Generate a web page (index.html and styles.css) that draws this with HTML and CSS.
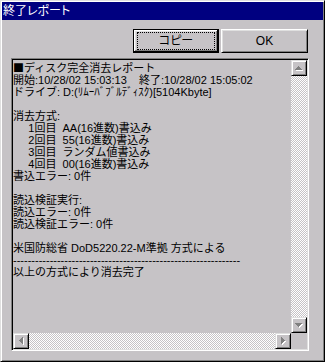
FILE: index.html
```html
<!DOCTYPE html>
<html lang="ja">
<head>
<meta charset="utf-8">
<title>終了レポート</title>
<link rel="stylesheet" href="styles.css">
</head>
<body>
<div class="window">
  <div class="titlebar"><span class="title">終了レポート</span></div>
  <div class="body">
    <div class="buttons">
      <button class="btn btn-default"><span class="focus">コピー</span></button>
      <button class="btn btn-ok"><span class="label">OK</span></button>
    </div>
    <div class="edit">
<pre class="text"><span class="heading">■ディスク完全消去レポート</span>
開始:10/28/02 15:03:13    終了:10/28/02 15:05:02
ドライブ: D:(ﾘﾑｰﾊﾞﾌﾞﾙﾃﾞｨｽｸ)[5104Kbyte]

消去方式:
     1回目  AA(16進数)書込み
     2回目  55(16進数)書込み
     3回目  ランダム値書込み
     4回目  00(16進数)書込み
書込エラー: 0件

読込検証実行:
読込エラー: 0件
読込検証エラー: 0件

米国防総省 DoD5220.22-M準拠 方式による
--------------------------------------------------------------
以上の方式により消去完了</pre>
      <div class="vscroll">
        <div class="sbtn">
          <svg width="8" height="5" viewBox="0 0 8 5" shape-rendering="crispEdges">
            <g fill="#fff"><rect x="4" y="1" width="1" height="1"/><rect x="3" y="2" width="3" height="1"/><rect x="2" y="3" width="5" height="1"/><rect x="1" y="4" width="7" height="1"/></g>
            <g fill="#808080"><rect x="3" y="0" width="1" height="1"/><rect x="2" y="1" width="3" height="1"/><rect x="1" y="2" width="5" height="1"/><rect x="0" y="3" width="7" height="1"/></g>
          </svg>
        </div>
        <div class="track"></div>
        <div class="sbtn">
          <svg width="8" height="5" viewBox="0 0 8 5" shape-rendering="crispEdges">
            <g fill="#fff"><rect x="1" y="1" width="7" height="1"/><rect x="2" y="2" width="5" height="1"/><rect x="3" y="3" width="3" height="1"/><rect x="4" y="4" width="1" height="1"/></g>
            <g fill="#808080"><rect x="0" y="0" width="7" height="1"/><rect x="1" y="1" width="5" height="1"/><rect x="2" y="2" width="3" height="1"/><rect x="3" y="3" width="1" height="1"/></g>
          </svg>
        </div>
      </div>
      <div class="hscroll">
        <div class="sbtn">
          <svg width="5" height="8" viewBox="0 0 5 8" shape-rendering="crispEdges">
            <g fill="#fff"><rect x="1" y="4" width="1" height="1"/><rect x="2" y="3" width="1" height="3"/><rect x="3" y="2" width="1" height="5"/><rect x="4" y="1" width="1" height="7"/></g>
            <g fill="#808080"><rect x="0" y="3" width="1" height="1"/><rect x="1" y="2" width="1" height="3"/><rect x="2" y="1" width="1" height="5"/><rect x="3" y="0" width="1" height="7"/></g>
          </svg>
        </div>
        <div class="track"></div>
        <div class="sbtn">
          <svg width="5" height="8" viewBox="0 0 5 8" shape-rendering="crispEdges">
            <g fill="#fff"><rect x="1" y="1" width="1" height="7"/><rect x="2" y="2" width="1" height="5"/><rect x="3" y="3" width="1" height="3"/><rect x="4" y="4" width="1" height="1"/></g>
            <g fill="#808080"><rect x="0" y="0" width="1" height="7"/><rect x="1" y="1" width="1" height="5"/><rect x="2" y="2" width="1" height="3"/><rect x="3" y="3" width="1" height="1"/></g>
          </svg>
        </div>
      </div>
      <div class="corner"></div>
    </div>
  </div>
</div>
</body>
</html>
```
FILE: styles.css
```css
* { box-sizing: border-box; }
html, body { margin: 0; padding: 0; }
body {
  width: 325px;
  height: 362px;
  overflow: hidden;
  background: #c6c3c6;
  font-family: "Liberation Sans", "Noto Sans CJK JP", sans-serif;
  font-size: 11px;
  color: #000;
}
.window {
  width: 325px;
  height: 362px;
  border: 1px solid;
  border-color: #dfdfdf #000 #000 #dfdfdf;
  box-shadow: inset 1px 1px #fff, inset -1px -1px #808080;
  padding: 1px;
  display: flex;
  flex-direction: column;
  background: #c6c3c6;
}
.titlebar {
  height: 18px;
  flex: none;
  background: #000080;
  color: #fff;
  display: flex;
  align-items: center;
  padding-left: 1px;
  font-size: 12px;
  line-height: 12px;
  font-feature-settings: "palt";
}
.body {
  flex: 1;
  display: flex;
  flex-direction: column;
  padding: 9px 14px 9px 9px;
}
.buttons {
  display: flex;
  justify-content: flex-end;
  gap: 2px;
  height: 24px;
  margin-right: 1px;
  margin-bottom: 5px;
  flex: none;
}
.btn {
  height: 24px;
  padding: 0;
  margin: 0;
  font: inherit;
  color: #000;
  background: #c6c3c6;
  display: flex;
  align-items: stretch;
  justify-content: center;
}
.btn-default {
  width: 86px;
  border: 1px solid #000;
  box-shadow: inset -1px -1px #000, inset 1px 1px #fff, inset -2px -2px #808080, inset 2px 2px #dfdfdf;
  padding: 2px 3px;
}
.focus {
  flex: 1;
  border: 1px dotted #000;
  display: flex;
  align-items: center;
  justify-content: center;
  line-height: 12px;
  font-size: 12px;
  font-feature-settings: "palt";
}
.btn-ok {
  width: 87px;
  border: 1px solid;
  border-color: #fff #000 #000 #fff;
  box-shadow: inset 1px 1px #dfdfdf, inset -1px -1px #808080;
  align-items: center;
  line-height: 12px;
  font-size: 12px;
}
.edit {
  height: 293px;
  flex: none;
  display: grid;
  grid-template-columns: 1fr 16px;
  grid-template-rows: 1fr 16px;
  border: 1px solid;
  border-color: #808080 #fff #fff #808080;
  box-shadow: inset 1px 1px #000, inset -1px -1px #dfdfdf;
  padding: 1px;
}
.text {
  margin: 0;
  padding: 1px 0 0 0;
  font: inherit;
  line-height: 12px;
  white-space: pre;
  overflow: hidden;
  color: #000;
}
.heading {
  font-family: "Noto Sans CJK JP", sans-serif;
}
.vscroll {
  display: flex;
  flex-direction: column;
}
.hscroll {
  display: flex;
  flex-direction: row;
}
.track {
  flex: 1;
  background-color: #c6c3c6;
  background-image: repeating-conic-gradient(#fff 0 25%, #c6c3c6 0 50%);
  background-size: 2px 2px;
}
.sbtn {
  width: 16px;
  height: 16px;
  flex: none;
  border: 1px solid;
  border-color: #dfdfdf #000 #000 #dfdfdf;
  box-shadow: inset 1px 1px #fff, inset -1px -1px #808080;
  background: #c6c3c6;
  display: flex;
  align-items: center;
  justify-content: center;
}
.sbtn svg { display: block; }
.corner { background: #c6c3c6; }
```
